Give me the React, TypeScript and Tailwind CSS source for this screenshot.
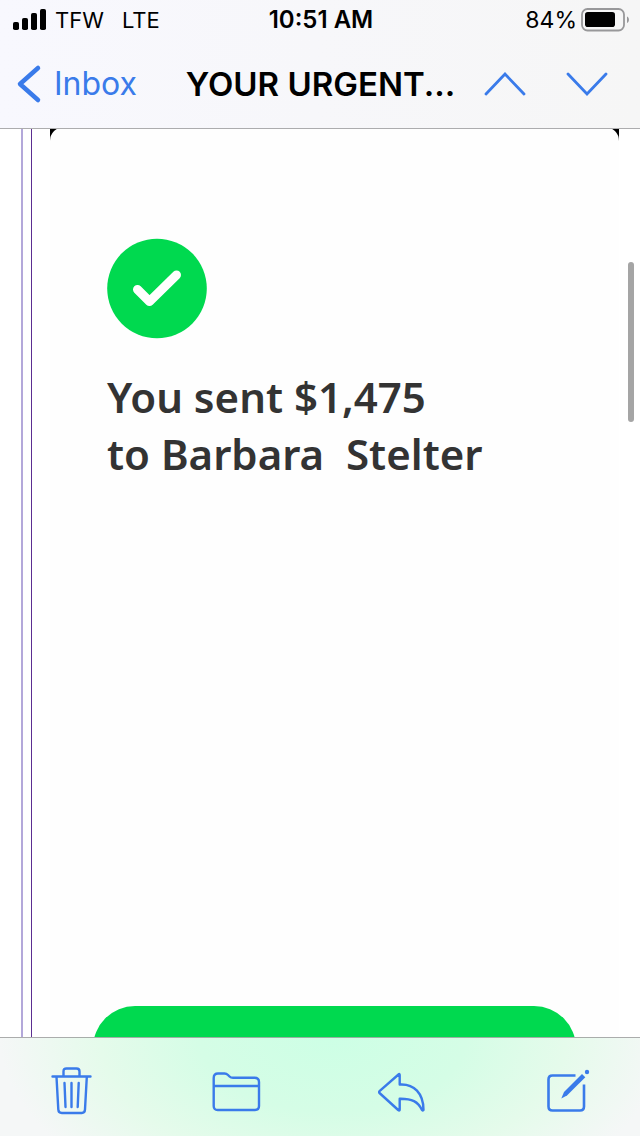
import type { ReactNode } from 'react';

function SignalIcon() {
  return (
    <svg width="34" height="22" viewBox="0 0 34 22" aria-hidden="true">
      <rect x="0" y="13" width="6" height="8" rx="1.8" />
      <rect x="9" y="9" width="6" height="12" rx="1.8" />
      <rect x="18" y="4" width="6" height="17" rx="1.8" />
      <rect x="27" y="0" width="6" height="21" rx="1.8" />
    </svg>
  );
}

function BatteryIcon() {
  return (
    <svg width="48" height="24" viewBox="0 0 48 24" aria-hidden="true">
      <rect x="1" y="1" width="42" height="21.5" rx="5.5" fill="none" stroke="#98989a" strokeWidth="1.8" />
      <rect x="4" y="4" width="30" height="15" rx="2.8" />
      <path d="M46 8.5c2.6 1 2.6 5.500 0 6.500z" fill="#98989a" />
    </svg>
  );
}

function StatusBar() {
  return (
    <div className="grid h-10 grid-cols-3 items-center pl-[13px] pr-[11px] text-[23px] leading-7 text-black">
      <div className="flex items-center gap-2 text-[22px]">
        <SignalIcon />
        <span>TFW</span>
        <span className="ml-2.5">LTE</span>
      </div>
      <div className="text-center text-[24px] font-semibold">10:51 AM</div>
      <div className="flex items-center justify-end gap-1">
        <span>84%</span>
        <BatteryIcon />
      </div>
    </div>
  );
}

function NavBar() {
  return (
    <nav className="flex h-22 items-center pl-4 pr-8">
      <a href="#inbox" className="flex items-center gap-3 text-[32px] leading-10 text-[#3a7bea]">
        <svg width="26" height="40" viewBox="0 0 26 40" fill="none" stroke="currentColor" strokeWidth="4.500" strokeLinecap="round" strokeLinejoin="round" aria-hidden="true">
          <path d="M22 4L4 20l18 16" />
        </svg>
        Inbox
      </a>
      <h1 className="min-w-0 flex-1 pl-5 text-center text-[33px] leading-10 font-semibold text-black">YOUR URGENT...</h1>
      <div className="flex gap-10 text-[#3a7bea]">
        <button type="button" aria-label="Previous message">
          <svg width="42" height="24" viewBox="0 0 42 24" fill="none" stroke="currentColor" strokeWidth="2.800" strokeLinecap="round" aria-hidden="true">
            <path d="M2 22L21 2l19 20" />
          </svg>
        </button>
        <button type="button" aria-label="Next message">
          <svg width="42" height="24" viewBox="0 0 42 24" fill="none" stroke="currentColor" strokeWidth="2.800" strokeLinecap="round" aria-hidden="true">
            <path d="M2 2l19 20L40 2" />
          </svg>
        </button>
      </div>
    </nav>
  );
}

function Message() {
  return (
    <main className="relative flex flex-1 overflow-hidden bg-white pl-[21px]">
      <div className="flex w-[11px] shrink-0 justify-between">
        <div className="w-0.5 bg-[#b3a8da]" />
        <div className="w-px bg-[#5b2e91]" />
      </div>
      <div className="-mt-0.5 mr-[21px] ml-[18px] flex flex-1 bg-black">
        <article className="flex flex-1 flex-col rounded-t-[14px] bg-[#fefefe] px-[43px] pt-[111px]">
          <svg className="ml-[14px]" width="100" height="101" viewBox="0 0 100 101" role="img" aria-label="Sent">
            <circle cx="50" cy="50.500" r="49.800" fill="#00d94f" />
            <path d="M30.500 51.500L42.500 63.500L69.500 37" fill="none" stroke="#fff" strokeWidth="9" strokeLinecap="round" strokeLinejoin="round" />
          </svg>
          <p className="mt-[29px] ml-[14px] font-['Noto_Sans',sans-serif] text-[42px] leading-[57px] font-semibold whitespace-pre text-[#333]">
            {'You sent $1,475\nto Barbara  Stelter'}
          </p>
          <button type="button" aria-label="View payment" className="mt-auto -mb-[53px] h-[84px] shrink-0 rounded-full bg-[#00d94f]" />
        </article>
      </div>
      <div className="absolute top-[133px] right-[6px] h-40 w-1.5 rounded-full bg-[#a5a5a5]" />
    </main>
  );
}

function ToolButton({ label, children }: { label: string; children: ReactNode }) {
  return (
    <button type="button" aria-label={label}>
      <svg width="50" height="50" viewBox="0 0 50 50" fill="none" stroke="currentColor" strokeWidth="2.400" strokeLinecap="round" strokeLinejoin="round" aria-hidden="true">
        {children}
      </svg>
    </button>
  );
}

function Toolbar() {
  return (
    <footer className="flex h-[99px] items-center justify-between border-t border-black/30 bg-[#f6f7f7] bg-[radial-gradient(ellipse_52%_190%_at_52%_0%,#cdffe5_0%,#d5fde6_40%,#e5fbeb_70%,#f5f7f7_100%)] px-[47px] pt-2 text-[#3a7bea]">
      <ToolButton label="Delete">
        <path d="M5.500 10.500h38M16.500 10V5.500Q16.500 2.500 19.500 2.500H29.500Q32.500 2.500 32.500 5.500V10M9.500 11l1.800 32.500q.2 3.500 3.500 3.500h20q3 0 3.200-3.500L39.800 11" />
        <path d="M17.500 17l1 24M24.500 17v24M31.700 17l-1 24" />
      </ToolButton>
      <ToolButton label="Move to folder">
        <path d="M1.700 12Q1.700 7.500 6 7.500H12.500Q14.500 7.500 16 9L17.500 10.500Q18.700 11.700 21 11.700H42.500Q47 11.700 47 16V40Q47 44 43 44H5.700Q1.700 44 1.700 40zM2.500 20h44" />
      </ToolButton>
      <ToolButton label="Reply">
        <path d="M20.500 8.500Q21.700 7.400 21.700 9V18.500C36 17.500 45.500 27.500 45.500 44Q45 45 44 44C40 35.500 34 32.500 21.700 32.700V43.500Q21.700 45.200 20.200 44L1.500 27Q.8 26 1.500 25.200z" />
      </ToolButton>
      <ToolButton label="Compose">
        <path d="M32.500 9.500H9.500Q5.500 9.500 5.500 13.500V40.500Q5.500 44.500 9.500 44.500H37Q41 44.500 41 40.500V18.500" strokeLinecap="butt" strokeWidth="2.600" />
        <path d="M39 8L42.300 11.300L24 29.500L18.300 32.500L21 26z" fill="currentColor" stroke="none" />
        <circle cx="44" cy="6" r="2.200" fill="currentColor" stroke="none" />
      </ToolButton>
    </footer>
  );
}

export default function App() {
  return (
    <div className="flex min-h-screen flex-col font-['Inter',sans-serif]">
      <header className="border-b border-[#acacae] bg-linear-to-r from-[#f8f8fe] to-[#f6f6f6]">
        <StatusBar />
        <NavBar />
      </header>
      <Message />
      <Toolbar />
    </div>
  );
}
